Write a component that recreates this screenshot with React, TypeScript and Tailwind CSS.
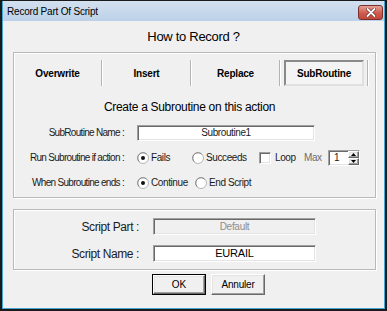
import type { ReactNode } from 'react';

const sunken =
  'border border-t-[#a0a0a0] border-l-[#a0a0a0] border-r-white border-b-white shadow-[inset_1px_1px_0_#696969,inset_-1px_-1px_0_#e3e3e3]';
const raised =
  'border border-t-white border-l-white border-r-[#696969] border-b-[#696969] shadow-[inset_-1px_-1px_0_#a0a0a0,inset_1px_1px_0_#e3e3e3]';
const groupBox = 'border border-[#b9b9b9] shadow-[inset_1px_1px_0_#fff,1px_1px_0_#fff]';

function Radio({ checked }: { checked?: boolean }) {
  return (
    <svg width="12" height="12" viewBox="0 0 12 12" className="shrink-0">
      <circle cx="6" cy="6" r="5.5" fill="#fff" stroke="#b4b4b4" />
      <path d="M2.3 9.7 A5 5 0 0 1 9.7 2.3" fill="none" stroke="#8a8a8a" />
      {checked && <circle cx="6" cy="6" r="2" fill="#111" />}
    </svg>
  );
}

function Check() {
  return <div className={`w-[12px] h-[12px] bg-white shrink-0 ${sunken}`} />;
}

function Sep() {
  return <div className="w-[2px] h-full border-l border-l-[#b4b4b4] border-r border-r-white" />;
}

function Tab({ children }: { children: ReactNode }) {
  return (
    <div className="w-[87px] h-full flex items-center justify-center text-[10px] font-bold tracking-[-0.2px] text-black">
      {children}
    </div>
  );
}

function Row({ label, children }: { label: string; children: ReactNode }) {
  return (
    <div className="h-[25px] flex items-center">
      <div className="w-[113px] pr-[3px] text-right text-[10px] tracking-[-0.7px] text-[#1a1a1a]">{label}</div>
      <div className="ml-[10px] flex items-center text-[10px] tracking-[-0.4px] text-[#1a1a1a]">{children}</div>
    </div>
  );
}

function Opt({ w, checked, children }: { w: string; checked?: boolean; children: ReactNode }) {
  return (
    <div className={`${w} flex items-center gap-[2px]`}>
      <Radio checked={checked} />
      <span>{children}</span>
    </div>
  );
}

export default function App() {
  return (
    <div className="w-[387px] h-[311px] bg-[#1b1b1b] pt-[1px] px-[2px] pb-[2px] font-['Liberation_Sans',Arial,sans-serif]">
      <div className="h-full flex flex-col border-x border-b border-[#43a7d2] bg-[#f0f0f0]">
        {/* title bar */}
        <div className="h-[20px] flex items-start justify-between bg-[linear-gradient(to_bottom,#d3e0ef,#bcd1e9)]">
          <span className="pl-[4px] pt-[6px] text-[10px] leading-none tracking-[-0.2px] text-black">Record Part Of Script</span>
          <div className="mt-[4px] mr-[1px] w-[25px] h-[15px] rounded-[3px] border border-[#7b3129] bg-[linear-gradient(to_bottom,#e3a196,#cf5b4e_55%,#c2473b)] flex items-center justify-center">
            <svg width="10" height="9" viewBox="0 0 10 9">
              <path d="M1.5 1 L8.5 8 M8.5 1 L1.5 8" stroke="#6d2a22" strokeWidth="3.2" strokeLinecap="round" />
              <path d="M1.5 1 L8.5 8 M8.5 1 L1.5 8" stroke="#fff" strokeWidth="1.8" strokeLinecap="round" />
            </svg>
          </div>
        </div>

        {/* heading */}
        <div className="h-[31px] flex items-center justify-center text-[13px] tracking-[-0.3px] text-black">How to Record ?</div>

        {/* first group */}
        <div className={`ml-[10px] w-[363px] pb-[2px] ${groupBox}`}>
          <div className="mt-[7px] h-[26px] flex">
            <Tab>Overwrite</Tab>
            <Sep />
            <Tab>Insert</Tab>
            <Sep />
            <Tab>Replace</Tab>
            <Sep />
            <div className="w-[86px] h-full px-[3px]">
              <div className="h-full border-2 border-t-[#8a8a8a] border-l-[#8a8a8a] border-r-[#e0e0e0] border-b-[#e0e0e0] bg-[#f4f4f4] flex items-center justify-center text-[10px] font-bold tracking-[-0.2px] text-black">
                SubRoutine
              </div>
            </div>
            <Sep />
          </div>

          <div className="mt-[8px] h-[26px] pr-[10px] flex items-center justify-center text-[12px] tracking-[-0.3px] text-black">
            Create a Subroutine on this action
          </div>

          <Row label="SubRoutine Name :">
            <div className={`w-[178px] h-[16px] bg-white flex items-center justify-center ${sunken}`}>Subroutine1</div>
          </Row>
          <Row label="Run Subroutine if action :">
            <Opt w="w-[55px]" checked>Fails</Opt>
            <Opt w="w-[67px]">Succeeds</Opt>
            <div className="w-[45px] flex items-center gap-[4px]">
              <Check />
              <span>Loop</span>
            </div>
            <span className="w-[24px] text-[#6d6d6d]">Max</span>
            <div className={`w-[32px] h-[16px] bg-white flex items-center justify-between ${sunken}`}>
              <span className="pl-[5px]">1</span>
              <div className="w-[11px] h-full flex flex-col">
                <div className={`flex-1 bg-[#f0f0f0] flex items-center justify-center ${raised}`}>
                  <svg width="5" height="3" viewBox="0 0 5 3"><path d="M0 3 L2.5 0 L5 3Z" fill="#000" /></svg>
                </div>
                <div className={`flex-1 bg-[#f0f0f0] flex items-center justify-center ${raised}`}>
                  <svg width="5" height="3" viewBox="0 0 5 3"><path d="M0 0 L2.5 3 L5 0Z" fill="#000" /></svg>
                </div>
              </div>
            </div>
          </Row>
          <Row label="When Subroutine ends :">
            <Opt w="w-[58px]" checked>Continue</Opt>
            <Opt w="w-[70px]">End Script</Opt>
          </Row>
        </div>

        {/* second group */}
        <div className={`ml-[10px] mt-[11px] w-[363px] pt-[3px] pb-[2px] ${groupBox}`}>
          <div className="h-[27px] flex items-center">
            <div className="w-[126px] pr-[1px] text-right text-[12px] tracking-[-0.4px] text-[#1a1a1a]">Script Part :</div>
            <div className={`ml-[13px] w-[163px] h-[17px] bg-[#f0f0f0] flex items-center justify-center text-[10px] tracking-[-0.3px] text-[#8d8d8d] ${sunken}`}>
              Default
            </div>
          </div>
          <div className="h-[27px] flex items-center">
            <div className="w-[126px] pr-[1px] text-right text-[12px] tracking-[-0.4px] text-[#1a1a1a]">Script Name :</div>
            <div className={`ml-[13px] w-[163px] h-[17px] bg-white flex items-center justify-center text-[11px] tracking-[-0.2px] text-black ${sunken}`}>
              EURAIL
            </div>
          </div>
        </div>

        {/* buttons */}
        <div className="mt-[4px] pl-[149px] flex gap-[5px]">
          <div className="w-[54px] h-[21px] border border-black">
            <div className={`h-full flex items-center justify-center text-[10px] text-black bg-[#f0f0f0] ${raised}`}>OK</div>
          </div>
          <div className={`w-[54px] h-[21px] flex items-center justify-center text-[10px] tracking-[-0.2px] text-black bg-[#f0f0f0] ${raised}`}>
            Annuler
          </div>
        </div>
      </div>
    </div>
  );
}
